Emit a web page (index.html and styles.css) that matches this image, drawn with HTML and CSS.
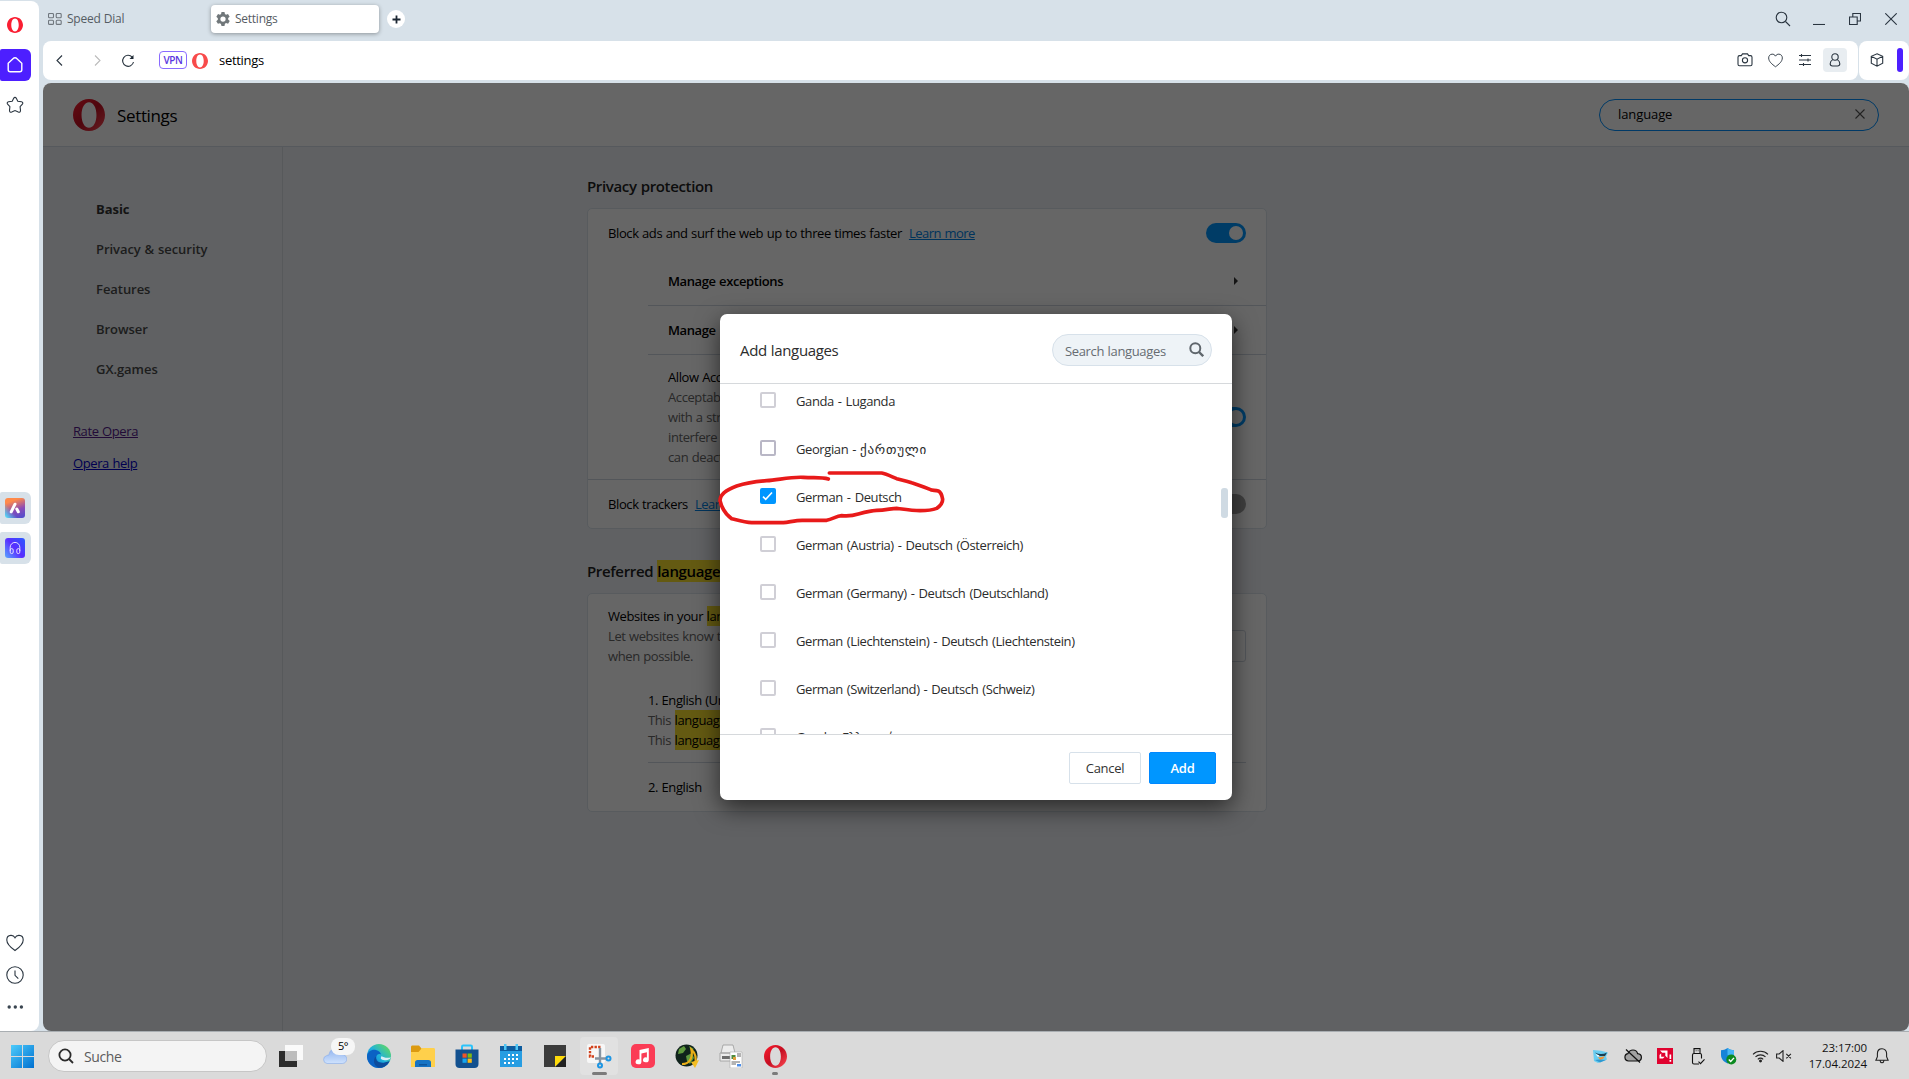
FILE: index.html
```html
<!DOCTYPE html>
<html lang="en">
<head>
    <meta charset="UTF-8">
    <title>Settings</title>
    <link rel="stylesheet" href="styles.css">
</head>
<body>
    <!-- shared shapes -->
    <svg class="defs" width="0" height="0">
        <defs>
            <linearGradient id="operaRed" x1="0" y1="0" x2="1" y2="1">
                <stop offset="0" stop-color="#ff1b2d"/>
                <stop offset="0.5" stop-color="#c50f22"/>
                <stop offset="1" stop-color="#ff4b55"/>
            </linearGradient>
            <linearGradient id="winBlue" x1="0" y1="0" x2="1" y2="1">
                <stop offset="0" stop-color="#4ccbfb"/>
                <stop offset="1" stop-color="#0070d0"/>
            </linearGradient>
            <linearGradient id="cloud" x1="0" y1="0" x2="0" y2="1">
                <stop offset="0" stop-color="#8fb2ee"/>
                <stop offset="1" stop-color="#cfe2fd"/>
            </linearGradient>
            <linearGradient id="edge" x1="0" y1="1" x2="1" y2="0">
                <stop offset="0" stop-color="#0a6bd0"/>
                <stop offset="0.5" stop-color="#1fb1dc"/>
                <stop offset="1" stop-color="#6fe04a"/>
            </linearGradient>
            <symbol id="o-logo" viewBox="0 0 24 24">
                <path fill-rule="evenodd" d="M12 0C5.4 0 0 5.4 0 12s5.4 12 12 12 12-5.400 12-12S18.600 0 12 0zM12 2.400c3.400 0 5.600 4.200 5.600 9.600s-2.200 9.600-5.600 9.600S6.400 17.400 6.400 12 8.600 2.400 12 2.400z"/>
            </symbol>
            <symbol id="heart" viewBox="0 0 18 18">
                <path d="M9 3.800C8 1.900 6.500 1.300 4.900 1.400 2.500 1.500.8 3.400.8 5.900c0 4.300 4 7.600 8.200 10.600 4.200-3 8.200-6.300 8.200-10.600 0-2.500-1.700-4.400-4.100-4.500C11.500 1.300 10 1.900 9 3.800z"/>
            </symbol>
        </defs>
    </svg>

    <div class="window">
        <div class="rail">
            <div class="rail-item"><svg class="logo-red" width="16" height="16"><use href="#o-logo"/></svg></div>
            <div class="rail-item active">
                <svg class="line white" width="16" height="16" viewBox="0 0 16 16"><path d="M1.200 6.300v6.500c0 1 .9 1.900 2 1.900h9.600c1.100 0 2-.9 2-1.900V6.300L10 1.700c-1.200-1.200-2.800-1.200-4 0z"/></svg>
            </div>
            <div class="rail-item">
                <svg class="line" width="18" height="18" viewBox="0 0 18 18"><path d="M9 1.400c.6 0 1 .3 1.300.8l1.500 3 3.700.6c1.300.3 1.700 1.500.9 2.400l-2.300 2.500.4 3.700c.1 1.400-1 2.200-2.200 1.700L9 14.500l-3.300 1.600c-1.200.5-2.300-.3-2.200-1.700l.4-3.700-2.300-2.500c-.8-.9-.4-2.100.9-2.400l3.700-.6 1.500-3c.3-.5.7-.8 1.300-.8z"/></svg>
            </div>
            <div class="rail-apps">
                <div class="app-tile">
                    <div class="app aria"><svg width="20" height="20" viewBox="0 0 20 20"><path d="M6.200 13.800L10 6.200M11.800 11l1.500 2.800" stroke="#fff" stroke-width="3" stroke-linecap="round"/></svg></div>
                </div>
                <div class="app-tile">
                    <div class="app player"><svg width="20" height="20" viewBox="0 0 20 20" fill="none" stroke="#e3dcff" stroke-width="1"><path d="M5.200 13V9.200a4.800 4.800 0 0 1 9.600 0V13"/><rect x="5.200" y="10.600" width="3" height="5" rx="1.500"/><rect x="11.800" y="10.600" width="3" height="5" rx="1.500"/></svg></div>
                </div>
            </div>
            <div class="rail-bottom">
                <svg class="line" width="18" height="18"><use href="#heart"/></svg>
                <svg class="line" width="18" height="18" viewBox="0 0 18 18"><circle cx="9" cy="9" r="8.200"/><path d="M9 4.500V9.300l3.300 3.300"/></svg>
                <svg class="dots" width="18" height="18" viewBox="0 0 18 18"><circle cx="3.200" cy="9" r="1.700"/><circle cx="9.300" cy="9" r="1.700"/><circle cx="15.400" cy="9" r="1.700"/></svg>
            </div>
        </div>

        <div class="main">
            <div class="tabs">
                <div class="tab">
                    <svg class="line grey" width="14" height="12" viewBox="0 0 14 12"><rect x=".5" y=".5" width="5" height="4.200" rx="1"/><rect x="8.200" y=".5" width="5" height="4.200" rx="1"/><rect x=".5" y="7.200" width="5" height="4.200" rx="1"/><rect x="8.200" y="7.200" width="5" height="4.200" rx="1"/></svg>
                    <span>Speed Dial</span>
                </div>
                <div class="tab current">
                    <svg width="14" height="14" viewBox="0 0 16 16"><path fill="#70777a" fill-rule="evenodd" d="M6.300 0h3.400l.5 2.300 1.300.7L13.700 2.300l1.900 3-1.700 1.600v1.800l1.800 1.700-1.900 3-2.300-.7-1.300.8L9.700 16H6.300l-.6-2.400-1.300-.8-2.200.7-1.900-3 1.800-1.700V7L.4 5.300l1.900-3 2.200.7 1.300-.7zM8 5a3 3 0 1 0 0 6 3 3 0 0 0 0-6z"/></svg>
                    <span>Settings</span>
                </div>
                <div class="new-tab"><svg width="9" height="9" viewBox="0 0 9 9"><path d="M4.500.5v8M.5 4.500h8" stroke="#1c2733" stroke-width="1.800"/></svg></div>
                <div class="win-buttons">
                    <svg class="line find" width="16" height="16" viewBox="0 0 16 16"><circle cx="6.500" cy="6.500" r="5.300"/><path d="M10.500 10.500l4.500 4.500"/></svg>
                    <svg class="line" width="12" height="12" viewBox="0 0 12 12"><path d="M0 11.500h12"/></svg>
                    <svg class="line" width="12" height="12" viewBox="0 0 12 12"><path d="M.5 4h7.700v7.500H.5zM3.800 4V.500h7.700V8H8.200"/></svg>
                    <svg class="line" width="12" height="12" viewBox="0 0 12 12"><path d="M.3.300l11.400 11.400M11.700.300L.3 11.700"/></svg>
                </div>
            </div>

            <div class="toolbar">
                <div class="address">
                    <svg class="line" width="7" height="11" viewBox="0 0 7 11"><path d="M6 .500L1 5.500l5 5"/></svg>
                    <svg class="line faint" width="7" height="11" viewBox="0 0 7 11"><path d="M1 .500l5 5-5 5"/></svg>
                    <svg class="line reload" width="14" height="14" viewBox="0 0 14 14"><path d="M11.200 3.100A5.500 5.500 0 1 0 12.500 8"/><path d="M12.500 1v4H8.500z" fill="#1c2733" stroke="none"/></svg>
                    <span class="vpn">VPN</span>
                    <svg class="logo-soft" width="16" height="16"><use href="#o-logo"/></svg>
                    <span class="url">settings</span>
                    <div class="address-icons">
                        <svg class="line" width="16" height="14" viewBox="0 0 16 14"><path d="M1 4.200c0-1 .7-1.600 1.500-1.600h1.800L5.500.900h5l1.200 1.700h1.800c.8 0 1.500.6 1.500 1.600v7c0 .9-.7 1.500-1.500 1.500h-11C1.700 12.700 1 12.100 1 11.200z"/><circle cx="8" cy="7.300" r="2.600"/></svg>
                        <svg class="line" width="15" height="15"><use href="#heart"/></svg>
                        <svg class="line" width="12" height="12" viewBox="0 0 12 12"><path d="M0 1.500h12M0 6h12M0 10.500h12M2.500 0v3M9 4.500v3M4.500 9v3"/></svg>
                        <div class="profile"><svg class="line" width="12" height="14" viewBox="0 0 12 14"><circle cx="6" cy="4" r="3.200"/><path d="M3.700 6.600C2 7.600 1.200 9 1.200 10.800c0 1.400.9 2.200 2.300 2.200h5c1.400 0 2.300-.8 2.300-2.200 0-1.800-.8-3.200-2.500-4.200"/></svg></div>
                    </div>
                </div>
                <div class="ext">
                    <svg class="line" width="14" height="14" viewBox="0 0 14 14"><path d="M7 .800l5.700 2.500v6.900L7 13.200l-5.700-3V3.300zM1.300 3.300L7 6.200l5.700-2.900M7 6.200v7"/></svg>
                    <i></i>
                </div>
            </div>

            <div class="page">
                <div class="page-header">
                    <svg class="logo-grad" width="32" height="32"><use href="#o-logo"/></svg>
                    <h1>Settings</h1>
                    <div class="page-search">
                        <span>language</span>
                        <svg class="line clear" width="10" height="10" viewBox="0 0 10 10"><path d="M.5.500l9 9M9.500.500l-9 9"/></svg>
                    </div>
                </div>
                <div class="page-body">
                    <div class="menu">
                        <b class="selected">Basic</b>
                        <b>Privacy &amp; security</b>
                        <b>Features</b>
                        <b>Browser</b>
                        <b>GX.games</b>
                        <a class="visited">Rate Opera</a>
                        <a>Opera help</a>
                    </div>
                    <div class="content">
                        <h2>Privacy protection</h2>
                        <div class="card">
                            <div class="row first">Block ads and surf the web up to three times faster <a>Learn more</a><span class="toggle on"></span></div>
                            <div class="row sub"><b>Manage exceptions</b><span class="arrow"></span></div>
                            <div class="row sub line-top"><b class="lists">Manage lists</b><span class="arrow"></span></div>
                            <div class="row sub allow line-top">
                                <p>Allow Acceptable Ads<br>
                                <small>Acceptable Ads are nonintrusive ads, compliant<br>with a strict set of criteria. They do not<br>interfere with the content you are viewing. You<br>can deactivate them at any time.</small></p>
                                <span class="toggle on"></span>
                            </div>
                            <div class="row trackers">Block trackers <a>Learn more</a><span class="toggle"></span></div>
                        </div>

                        <h2>Preferred <mark>language</mark>s</h2>
                        <div class="card">
                            <div class="row websites">
                                <p>Websites in your <mark>language</mark>s<br>
                                <small>Let websites know the languages you speak. They will show content in them<br>when possible.</small></p>
                                <span class="big-button"></span>
                            </div>
                            <div class="lang">
                                <p>1. English (United States)<br>
                                <small>This <mark>language</mark> is used to display the Opera UI<br>This <mark>language</mark> is used when translating pages</small></p>
                            </div>
                            <div class="lang last">2. English</div>
                        </div>
                    </div>
                </div>

                <div class="overlay">
                    <div class="dialog">
                        <div class="dialog-header">
                            <span>Add languages</span>
                            <div class="dialog-search">
                                <span>Search languages</span>
                                <svg width="15" height="15" viewBox="0 0 15 15" fill="none" stroke="#5f666c" stroke-width="2"><circle cx="6.300" cy="6.300" r="5"/><path d="M10 10l4.200 4.200" stroke-width="2.400"/></svg>
                            </div>
                        </div>
                        <div class="dialog-list">
                            <div class="option"><i class="box"></i>Ganda - Luganda</div>
                            <div class="option"><i class="box dark"></i><span>Georgian - <span class="georgian">ქართული</span></span></div>
                            <div class="option"><i class="box checked"><svg width="15" height="16" viewBox="0 0 15 16"><path d="M3 8.600l2.700 2.700L12 4.500" fill="none" stroke="#fff" stroke-width="1.600"/></svg></i>German - Deutsch</div>
                            <div class="option"><i class="box"></i>German (Austria) - Deutsch (Österreich)</div>
                            <div class="option"><i class="box"></i>German (Germany) - Deutsch (Deutschland)</div>
                            <div class="option"><i class="box"></i>German (Liechtenstein) - Deutsch (Liechtenstein)</div>
                            <div class="option"><i class="box"></i>German (Switzerland) - Deutsch (Schweiz)</div>
                            <div class="option"><i class="box"></i>Greek - Ελληνικά</div>
                            <span class="thumb"></span>
                        </div>
                        <div class="dialog-footer">
                            <button>Cancel</button>
                            <button class="primary">Add</button>
                        </div>
                        <!-- red pen mark round the ticked language -->
                        <svg class="pen" width="240" height="70" viewBox="420 60 720 210"><path d="M775 117C755 111 735 114 700 112C660 110 625 120 590 122C550 125 525 130 500 138C475 147 450 160 450 182C455 205 470 225 485 236C505 241 525 247 545 248L640 248C660 246 680 240 700 241L770 241C790 236 800 228 815 227C835 229 850 227 865 222C890 215 905 211 920 211C945 211 965 205 980 205C1010 209 1030 212 1050 212C1070 212 1090 209 1100 205C1115 196 1118 188 1118 178C1116 166 1112 156 1105 153C1095 150 1085 152 1080 148C1060 140 1045 134 1025 128C1010 123 995 120 980 116C965 110 950 102 935 99L778 99"/></svg>
                    </div>
                </div>
            </div>
        </div>
    </div>

    <div class="taskbar">
        <svg class="start" width="23" height="23" viewBox="0 0 23 23"><path fill="url(#winBlue)" d="M0 0h11v11H0zM12 0h11v11H12zM0 12h11v11H0zM12 12h11v11H12z"/></svg>
        <div class="task-search">
            <svg width="16" height="16" viewBox="0 0 16 16" fill="none" stroke="#2b2b2b" stroke-width="1.800"><circle cx="7" cy="7" r="5.600"/><path d="M11 11l4 4"/></svg>
            <span>Suche</span>
        </div>
        <div class="task-icons">
            <div class="task"><svg width="24" height="24" viewBox="0 0 24 24"><path fill="#2c2c2c" d="M0 7h18v16H0z"/><path fill="#fafafa" d="M6 1h18v15H6z"/><path fill="#bdbdbd" d="M6 7h12v10H6z"/></svg></div>
            <div class="task weather">
                <svg width="24" height="16" viewBox="0 0 24 16"><path fill="url(#cloud)" stroke="#86abea" stroke-width=".6" d="M4 15.500a4 4 0 0 1-.5-7.800C4.500 7 5.500 7 6 7 6.500 3 9 .500 12.500.500c3.500 0 6 2.500 6.300 6 3 0 5 2 5 4.500s-2 4.500-4.500 4.500z"/></svg>
                <span class="badge">5°</span>
            </div>
            <div class="task"><svg width="24" height="24" viewBox="0 0 24 24"><circle cx="12" cy="12" r="12" fill="url(#edge)"/><path fill="#0b62c4" d="M0 12c1-5 5-7 9-6 3 .6 4.500 2.600 5 4.500-3-1.500-5.500 1-4.500 4.500 1.200 4 6 5.200 12.500 3C19.500 22 16 24 12 24 5.500 24-.300 18.500 0 12z"/><path fill="#0e4c9c" d="M9 12.500c-1 5 4 8.500 13.500 4.500-2 5-7 7-11 6.500C6 21.500 6 15 9 12.500z"/><path fill="#d9eef5" d="M14.500 12c0 1-1 1.600-.7 2.600 1 2 6 2 9 .3l1-2c-2 1.500-7 1-9.300-.9z"/></svg></div>
            <div class="task"><svg width="24" height="24" viewBox="0 0 24 24"><path fill="#dc9a10" d="M0 3c0-1 .6-1.500 1.500-1.500H8l2.500 3V9H0z"/><path fill="#ffd04b" d="M0 8h7.500L11 4h11.500c1 0 1.500.6 1.500 1.500V23H0z"/><path fill="#1673c4" d="M4 23v-4.500C4 17 5 16 6.500 16h11c1.500 0 2.500 1 2.500 2.500V23z"/><path fill="#0d559c" d="M8 20h8v1.500H8z"/></svg></div>
            <div class="task"><svg width="24" height="24" viewBox="0 0 24 24"><path fill="none" stroke="#2cc3fa" stroke-width="2" d="M7 6V2.800C7 2 7.400 1.500 8.200 1.500h7.600c.8 0 1.200.5 1.200 1.300V6"/><path fill="#12508f" d="M.500 5.500h23V20c0 2.500-1.500 4-4 4h-15c-2.500 0-4-1.500-4-4z"/><path fill="#f05428" d="M7.500 9.500h4.200v4.200H7.500z"/><path fill="#81bb10" d="M12.600 9.500h4.200v4.200h-4.200z"/><path fill="#15a6ef" d="M7.500 14.600h4.200v4.200H7.500z"/><path fill="#fdbb13" d="M12.600 14.600h4.200v4.200h-4.200z"/></svg></div>
            <div class="task"><svg width="24" height="24" viewBox="0 0 24 24"><path fill="#279de2" d="M1 2h22v21H1z"/><path fill="#0d5c9f" d="M1 2h22v5H1z"/><path fill="#4fc6f4" d="M5 0h2.500v6H5zM16.500 0H19v6h-2.500z"/><path stroke="#fff" stroke-width="2" stroke-dasharray="2 2" d="M9 11h11M5 15h14M5 19h11"/></svg></div>
            <div class="task"><svg width="24" height="24" viewBox="0 0 24 24"><path fill="#3b3b3b" d="M1 1h22v11L12 23H1z"/><path fill="#ffdb0a" d="M12 12h11L12 23z"/><path fill="#222" d="M23 12v11H12z"/></svg></div>
            <div class="task open"><svg width="26" height="26" viewBox="0 0 26 26"><rect x="1" y="1" width="18" height="19" rx="2" fill="#f7f7f7"/><path fill="none" stroke="#d2421c" stroke-width="2.400" stroke-dasharray="2.400 1.200" d="M14.500 4H4v9.500h4"/><path fill="none" stroke="#8894a0" stroke-width="2.400" d="M14 5v15M9 15.500h11"/><circle cx="22.500" cy="15.500" r="2" fill="#d9d9d9" stroke="#1d96e4" stroke-width="2"/><circle cx="14" cy="22.500" r="2" fill="#d9d9d9" stroke="#1d96e4" stroke-width="2"/></svg><i class="mark wide"></i></div>
            <div class="task"><svg width="24" height="24" viewBox="0 0 24 24"><rect width="24" height="24" rx="5" fill="#fb3c56"/><path fill="#fff" d="M8.500 6l9.300-2v11.700a2.900 2.500 0 1 1-1.900-2.300V8.300l-5.500 1.200v8.300a2.900 2.500 0 1 1-1.900-2.300z"/></svg></div>
            <div class="task"><svg width="24" height="24" viewBox="0 0 24 24"><circle cx="11.500" cy="11.500" r="11" fill="#10231c"/><path fill="#5f9a3e" d="M4 5l5-3 2 3-3 4-5 1zM11 12l6-3 2 5-4 6-3-3zM14 2l5 3-3 2z"/><path fill="none" stroke="#e9ad17" stroke-width="2.200" d="M7 20c7 0 11-5 9.500-14.500C20.500 9 21.500 15 20 21"/><path fill="#f3bd22" d="M16 18l8-2-4 8z"/></svg></div>
            <div class="task"><svg width="24" height="24" viewBox="0 0 24 24"><path fill="#ececec" stroke="#9a9a9a" stroke-width=".8" d="M4 1h10l2 8H2zM1 9h17v8H1z"/><path fill="#6d6d6d" d="M3 12h12v3H3z"/><path fill="#fff" stroke="#aaa" stroke-width=".6" d="M11 8h12v16H11z"/><path fill="#4f8b3c" d="M12.500 11h4v4h-4z"/><path fill="#e0a03c" d="M14 13h3v3h-3z"/><path stroke="#555" stroke-width=".9" d="M18 10h4M18 12h4M12.500 18H21M12.500 20H17"/><path fill="#4c8ee8" d="M18 20h4v2.500h-4z"/></svg></div>
            <div class="task"><svg class="logo-grad" width="23" height="23"><use href="#o-logo"/></svg><i class="mark"></i></div>
        </div>
        <div class="tray">
            <svg width="17" height="15" viewBox="0 0 17 15"><path fill="#68cdf1" d="M1 1l8 .8 7 1.700-2 4 1 3L6 14 2 12z"/><path fill="#1b3d50" d="M3 3.500c4 2 8 2 12 0L13 7 7 7z"/><path fill="#fff" d="M3.500 5l4 1.500L6 8z"/><path fill="#ee953c" d="M6 8c3 .5 4 0 7-1l-2 3-3 1z"/><path fill="#2e9ad2" d="M3 11l5 2.500 6-2.500-7-.5z"/></svg>
            <svg width="18" height="14" viewBox="0 0 18 14" fill="#a2a2a2" stroke="#111" stroke-width="1.200"><path d="M4.500 12a3.700 3.700 0 0 1-.7-7.300C5 2 7 1 9 1s4 1.200 4.600 3.600c2.300.2 3.800 1.800 3.800 3.700 0 2-1.500 3.700-3.700 3.700zM2 .5l14 13"/></svg>
            <svg width="16" height="16" viewBox="0 0 16 16"><path fill="#e0022f" d="M0 0h16v16H0z"/><path fill="#fff" d="M3 2.500h7.500V10L8.300 7.800V4.700H5.200zM2.500 7l1.700-1.700v3.500h3.500L6 10.500H2.500zM12.500 6.500h1.700v4.500h-1.700zM12.500 12h1.700v1.700h-1.700z"/></svg>
            <svg class="usb" width="14" height="17" viewBox="0 0 14 17" fill="none" stroke="#111" stroke-width="1.100"><path d="M3 5.500V.600h6v4.900M8 16H3c-1 0-1.500-.6-1.500-1.500V7c0-1 .5-1.500 1.500-1.500h6c1 0 1.500.5 1.500 1.500v3.500M4.700 2.800h.8M6.700 2.800h.8M7.500 13.700l2 2 4-4.300"/></svg>
            <svg width="17" height="18" viewBox="0 0 17 18"><path fill="#1683d8" d="M7.500 1C5.500 2.600 3 3.200 1 3.200V8c0 4 3 7 6.500 8.500C11 15 14 12 14 8V3.200c-2 0-4.500-.6-6.500-2.200z"/><path fill="#45b5f5" d="M7.500 1c2 1.600 4.500 2.200 6.500 2.200V8H7.500z"/><circle cx="11.300" cy="12.500" r="5" fill="#0c8a20"/><path d="M8.800 12.600l1.900 1.900 3.300-3.600" fill="none" stroke="#fff" stroke-width="1.400"/></svg>
            <svg class="wifi" width="17" height="14" viewBox="0 0 17 14" fill="none" stroke="#222" stroke-width="1.100"><path d="M1 5.300a10.600 10.600 0 0 1 15 0M3.500 7.900a7.100 7.100 0 0 1 10 0M5.800 10.300a3.800 3.800 0 0 1 5.400 0"/><circle cx="8.500" cy="12" r=".9" fill="#222"/></svg>
            <svg width="16" height="12" viewBox="0 0 16 12" fill="none" stroke="#222" stroke-width="1.100"><path d="M.6 4v4h2.600L7 11.300V.7L3.200 4zM10.300 3.800l4.600 4.600M14.900 3.800l-4.600 4.600"/></svg>
            <div class="clock">23:17:00<br>17.04.2024</div>
            <svg width="14" height="16" viewBox="0 0 14 16" fill="none" stroke="#222" stroke-width="1.100"><path d="M7 .700C4.200.700 2.400 2.800 2.400 5.500v3.200L.9 12.300h12.200l-1.500-3.600V5.500C11.600 2.800 9.800.700 7 .700zM5 12.500c.2 1.500 1 2.300 2 2.300s1.800-.8 2-2.300"/></svg>
        </div>
    </div>
</body>
</html>
```
FILE: styles.css
```css
* {
    box-sizing: border-box;
}

body {
    margin: 0;
    height: 1079px;
    display: flex;
    flex-direction: column;
    background-color: #d7e1e9;
    font-family: "Open Sans", "Noto Sans", "DejaVu Sans", sans-serif;
    font-size: 13px;
    letter-spacing: -0.4px;
    word-spacing: 0.5px;
    color: #000;
    overflow: hidden;
}

svg {
    display: block;
    flex-shrink: 0;
}

.defs {
    position: absolute;
}

.line {
    fill: none;
    stroke: #2a3540;
    stroke-width: 1.1;
}

.white {
    stroke: #fff;
    stroke-width: 1.4;
}

.grey { stroke: #70777e; }
.faint { stroke: #bbb; }
.logo-red { fill: #fa1e32; }
.logo-soft { fill: #f84b4b; }
.logo-grad { fill: url(#operaRed); }

.window {
    display: flex;
    height: 1031px;
}

/* left rail */
.rail {
    width: 39px;
    height: 1030px;
    margin: 1px 4px 0 0;
    padding-top: 8px;
    background-color: #fff;
    border-radius: 0 8px 8px 0;
    display: flex;
    flex-direction: column;
}

.rail-item {
    width: 31px;
    height: 32px;
    margin-bottom: 8px;
    padding-right: 2px;
    display: flex;
    align-items: center;
    justify-content: center;
    border-radius: 2px 6px 6px 2px;
}

.rail-item.active {
    background-color: #4d1fff;
}

.rail-apps {
    margin-top: 363px;
    display: flex;
    flex-direction: column;
    gap: 8px;
}

.app-tile {
    width: 31px;
    height: 32px;
    padding: 6px 5px;
    background-color: #d7e1e9;
    border-radius: 2px 6px 6px 2px;
}

.app {
    width: 20px;
    height: 20px;
    border-radius: 3px;
}

.aria {
    background: linear-gradient(50deg, #55d9f5 5%, transparent 35%), linear-gradient(160deg, #ff8a4a 20%, #8a4bb8 60%, #4a4fd0);
}

.player {
    background: linear-gradient(50deg, #5aa8ff, #5a2dff 50%, #2a5cff);
}

.rail-bottom {
    margin-top: auto;
    padding: 0 0 15px 6px;
    display: flex;
    flex-direction: column;
    gap: 14px;
}

.dots { fill: #3a4550; }

/* tab strip and address bar */
.main {
    flex: 1;
    min-width: 0;
    display: flex;
    flex-direction: column;
}

.tabs {
    height: 41px;
    padding-top: 5px;
    display: flex;
    align-items: flex-start;
    font-size: 12px;
    letter-spacing: -0.25px;
    color: #555c63;
}

.tab {
    width: 168px;
    height: 28px;
    padding-left: 5px;
    display: flex;
    align-items: center;
    gap: 5px;
}

.tab span {
    padding-bottom: 1px;
}

.tab.current {
    background-color: #fff;
    border-radius: 4px;
    box-shadow: 0 1px 4px rgba(0, 0, 0, 0.35);
}

.new-tab {
    width: 18px;
    height: 18px;
    margin: 5px 0 0 8px;
    border-radius: 50%;
    background-color: #fff;
    display: flex;
    align-items: center;
    justify-content: center;
}

.win-buttons {
    margin: 6px 12px 0 auto;
    display: flex;
    align-items: center;
    gap: 24px;
}

.find {
    margin-right: -2px;
}

.toolbar {
    display: flex;
    gap: 1px;
    height: 39px;
    margin-bottom: 3px;
}

.address {
    flex: 1;
    padding: 0 11px 0 13px;
    background-color: #fff;
    border-radius: 8px;
    display: flex;
    align-items: center;
}

.faint {
    margin-left: 31px;
}

.reload {
    margin-left: 20px;
}

.vpn {
    width: 28px;
    height: 18px;
    margin: 0 5px 1px 24px;
    border: 1px solid #8a6bff;
    border-radius: 4px;
    color: #5a35e0;
    font-size: 10px;
    font-weight: 600;
    line-height: 17px;
    text-align: center;
}

.url {
    margin-left: 11px;
    padding-bottom: 1px;
    letter-spacing: -0.3px;
}

.address-icons {
    margin-left: auto;
    padding-bottom: 1px;
    display: flex;
    align-items: center;
    gap: 16px;
}

.address-icons > :first-child {
    margin-right: -1px;
}

.profile {
    width: 24px;
    height: 24px;
    margin-left: -4px;
    border-radius: 4px;
    background-color: #e8edf1;
    display: flex;
    align-items: center;
    justify-content: center;
}

.ext {
    width: 50px;
    padding: 0 6px 1px 11px;
    background-color: #fff;
    border-radius: 8px;
    display: flex;
    align-items: center;
    justify-content: space-between;
}

.ext i {
    width: 6px;
    height: 24px;
    border-radius: 3px;
    background-color: #4d1fff;
}

/* settings page */
.page {
    position: relative;
    flex: 1;
    border-radius: 8px;
    overflow: hidden;
    background-color: #eff3f7;
    display: flex;
    flex-direction: column;
}

.page-header {
    height: 64px;
    padding: 0 30px;
    background-color: #fff;
    border-bottom: 1px solid #d7dfe8;
    display: flex;
    align-items: center;
}

h1 {
    margin: 0 0 0 12px;
    padding-top: 2px;
    font-size: 17px;
    font-weight: 400;
    letter-spacing: -0.35px;
}

.page-search {
    width: 280px;
    height: 32px;
    margin-left: auto;
    padding: 0 13px 2px 18px;
    border: 1px solid #0090ff;
    border-radius: 16px;
    display: flex;
    align-items: center;
    justify-content: space-between;
    font-weight: 500;
    letter-spacing: -0.1px;
}

.clear {
    margin-top: 1px;
    stroke: #555;
}

.page-body {
    flex: 1;
    display: flex;
}

.menu {
    width: 240px;
    padding: 42px 0 0 53px;
    border-right: 1px solid #d9dfe4;
    display: flex;
    flex-direction: column;
}

.menu b {
    height: 40px;
    line-height: 40px;
    font-weight: 600;
    letter-spacing: -0.05px;
    color: #4a4a4a;
}

.menu .selected {
    font-weight: 700;
    color: #333;
}

.menu a {
    height: 32px;
    margin-left: -23px;
    line-height: 32px;
    color: #0000c8;
    text-decoration: underline;
}

.menu .visited {
    margin-top: 26px;
    color: #551a8b;
}

.content {
    width: 680px;
    margin-left: 304px;
}

h2 {
    height: 61px;
    margin: 0;
    padding-top: 29px;
    line-height: 20px;
    font-size: 15px;
    font-weight: 600;
    letter-spacing: -0.35px;
    color: #222;
}

mark {
    background-color: #fbe22d;
    padding: 1px 0;
}

.card + h2 {
    height: 64px;
    padding-top: 32px;
}

.card {
    background-color: #fff;
    border: 1px solid #dbe3ec;
    border-radius: 5px;
}

.row {
    padding: 0 20px 0 20px;
    display: flex;
    align-items: center;
}

.row a {
    margin-left: 7px;
    color: #0082e6;
    letter-spacing: -0.5px;
    text-decoration: underline;
}

.first { height: 48px; }

.row.sub {
    height: 48px;
    margin-left: 60px;
}

.row.line-top {
    height: 49px;
    border-top: 1px solid #d0d6e0;
}

.row b {
    font-weight: 600;
}

.lists {
    word-spacing: 4px;
}

.toggle {
    width: 40px;
    height: 20px;
    margin-left: auto;
    padding: 3px;
    border-radius: 10px;
    background-color: #a0a0a0;
}

.toggle::before {
    content: "";
    display: block;
    width: 14px;
    height: 14px;
    border-radius: 50%;
    background-color: #fff;
}

.toggle.on {
    background-color: #0096ff;
}

.toggle.on::before {
    margin-left: 20px;
}

.arrow {
    margin: 0 8px 0 auto;
    border: 4px solid transparent;
    border-left: 4px solid #333;
    border-right: 0;
}

p {
    margin: 0;
    line-height: 20px;
}

small {
    font-size: 13px;
    color: #666;
}

.row.allow {
    height: 125px;
    padding-bottom: 1px;
}

.trackers {
    height: 49px;
    border-top: 1px solid #d0d6e0;
}

.websites {
    height: 84px;
    padding-top: 0;
}

.big-button {
    width: 90px;
    height: 32px;
    margin: 20px 0 0 auto;
    border: 1px solid #d0d6e0;
    border-radius: 3px;
}

.lang {
    height: 85px;
    margin: 0 20px 0 60px;
    padding-top: 12px;
    border-bottom: 1px solid #d0d6e0;
}

.lang.last {
    height: 48px;
    padding-top: 15px;
    border-bottom: 0;
}

/* dialog */
.overlay {
    position: absolute;
    top: 0;
    left: 0;
    right: 0;
    bottom: 0;
    background-color: rgba(0, 0, 0, 0.6);
    display: flex;
    align-items: center;
    justify-content: center;
}

.dialog {
    position: relative;
    width: 512px;
    height: 486px;
    background-color: #fff;
    border-radius: 7px;
    box-shadow: 0 8px 24px rgba(0, 0, 0, 0.6);
    display: flex;
    flex-direction: column;
    color: #2c2c2c;
}

.dialog-header {
    height: 70px;
    padding: 2px 20px 0;
    border-bottom: 1px solid #d6d9dc;
    display: flex;
    align-items: center;
    justify-content: space-between;
    font-size: 15px;
    letter-spacing: -0.35px;
}

.dialog-search {
    width: 160px;
    height: 32px;
    padding: 0 7px 0 12px;
    border: 1px solid #d7e1ea;
    border-radius: 16px;
    background-color: #eef3f7;
    display: flex;
    align-items: center;
    justify-content: space-between;
    font-size: 13px;
    color: #666c72;
}

.dialog-search span {
    padding-top: 2px;
}

.dialog-list {
    position: relative;
    height: 350px;
    overflow: hidden;
    padding-top: 1px;
}

.option {
    height: 48px;
    margin-top: -8px;
    margin-bottom: 8px;
    padding-left: 40px;
    display: flex;
    align-items: center;
    gap: 20px;
    word-spacing: 1px;
}

.georgian {
    letter-spacing: 0.8px;
}

.box {
    width: 16px;
    height: 16px;
    margin-top: -2px;
    border: 2px solid #d0cfd6;
    border-radius: 2px;
}

.box.dark {
    border-color: #b9b7c6;
}

.box.checked {
    border: 0;
    background-color: #0096ff;
}

.thumb {
    position: absolute;
    top: 104px;
    right: 4px;
    width: 7px;
    height: 30px;
    border-radius: 3px;
    background-color: #cfdae3;
}

.dialog-footer {
    flex: 1;
    border-top: 1px solid #d6d9dc;
    padding: 17px 16px 0;
    display: flex;
    justify-content: flex-end;
    align-items: flex-start;
    gap: 8px;
}

button {
    width: 72px;
    height: 32px;
    padding: 0;
    border: 1px solid #d7e1ea;
    border-radius: 2px;
    background-color: #fff;
    font: inherit;
    letter-spacing: -0.3px;
    color: #333;
}

button.primary {
    width: 67px;
    border-color: #0088ff;
    background-color: #0096ff;
    color: #fff;
    font-weight: 600;
}

.pen {
    position: absolute;
    left: -10px;
    top: 146px;
    fill: none;
    stroke: #e81a1a;
    stroke-width: 11;
    stroke-linecap: round;
    stroke-linejoin: round;
}

/* taskbar */
.taskbar {
    height: 48px;
    padding: 1px 20px 0 11px;
    border-top: 1px solid #a9aeb2;
    background-color: #dadada;
    display: flex;
    align-items: center;
}

.task-search {
    width: 219px;
    height: 32px;
    margin: 0 5px 0 14px;
    padding-left: 9px;
    border: 1px solid #c6c6c6;
    border-radius: 16px;
    background-color: #f4f4f4;
    display: flex;
    align-items: center;
    gap: 10px;
    font-size: 14px;
    color: #5c5c5c;
}

.task-icons {
    display: flex;
    gap: 6px;
}

.task {
    position: relative;
    width: 38px;
    height: 38px;
    display: flex;
    align-items: center;
    justify-content: center;
}

.task.open {
    border-radius: 4px;
    background-color: #e1e1e1;
}

.badge {
    position: absolute;
    left: 15px;
    top: 1px;
    width: 24px;
    height: 17px;
    border-radius: 8px;
    background-color: #f6f6f6;
    font-size: 11px;
    line-height: 16px;
    text-align: center;
}

.mark {
    position: absolute;
    bottom: 0;
    width: 6px;
    height: 3px;
    border-radius: 2px;
    background-color: #7b7b7b;
}

.mark.wide {
    width: 15px;
}

.tray {
    margin-left: auto;
    display: flex;
    align-items: center;
    gap: 15px;
}

.usb {
    margin-left: 3px;
}

.wifi {
    margin-right: -8px;
}

.clock {
    width: 60px;
    margin-right: -7px;
    font-size: 11.5px;
    letter-spacing: -0.05px;
    line-height: 16px;
    text-align: right;
    white-space: nowrap;
    color: #111;
}
```
